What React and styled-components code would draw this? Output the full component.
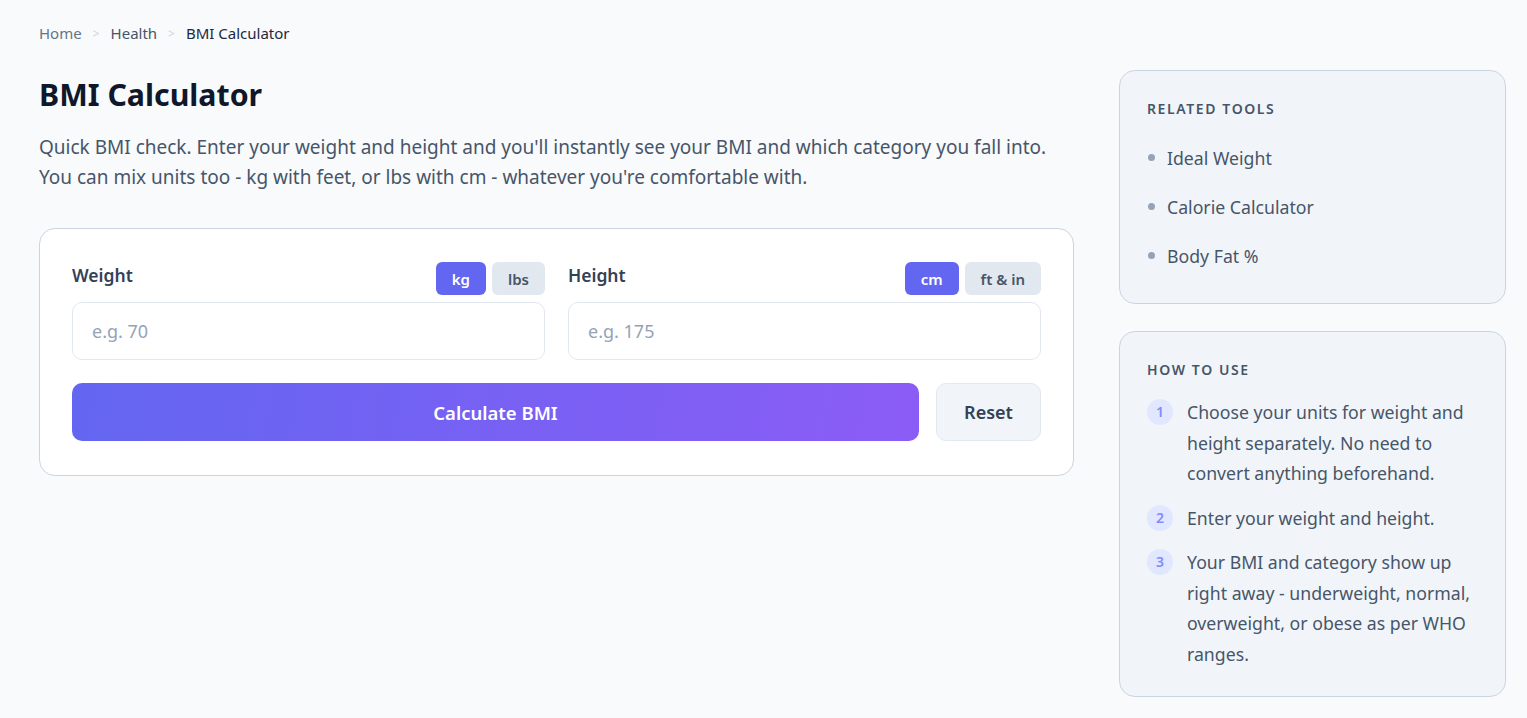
import React, { useState } from "react";
import styled, { createGlobalStyle } from "styled-components";

const GlobalStyle = createGlobalStyle`
  * { box-sizing: border-box; }
  body {
    margin: 0;
    background: #f8fafc;
    font-family: "Noto Sans", "Open Sans", sans-serif;
    color: #334155;
  }
`;

//layout
const Page = styled.div`
  padding: 22px 21px 20px 39px;
`;

const Breadcrumb = styled.nav`
  display: flex;
  align-items: center;
  gap: 11px;
  height: 22px;
`;

const Crumb = styled.span`
  color: ${(p) => (p.current ? "#1e293b" : p.sep ? "#cbd5e1" : p.tone || "#64748b")};
  font-size: ${(p) => (p.sep ? "12px" : "15px")};
`;

const Columns = styled.div`
  display: grid;
  grid-template-columns: 1035px 387px;
  gap: 45px;
  margin-top: 26px;
`;

const Main = styled.main`
  padding-top: 5px;
`;

//text
const Title = styled.h1`
  margin: 0;
  font-size: 30.3px;
  line-height: 40px;
  font-weight: 700;
  color: #0f172a;
`;

const Intro = styled.p`
  margin: 17px 0 0;
  font-size: 19px;
  line-height: 30px;
  color: #475569;
`;

//calculator card
const Card = styled.section`
  margin-top: 36px;
  background: #fff;
  border: 1px solid #cbd5e1;
  border-radius: 16px;
  padding: 32px 32px 34px;
`;

const Fields = styled.div`
  display: grid;
  grid-template-columns: 1fr 1fr;
  gap: 23px;
`;

const Field = styled.div`
  display: flex;
  flex-direction: column;
  gap: 7px;
`;

const FieldHead = styled.div`
  display: flex;
  justify-content: space-between;
  align-items: flex-start;
`;

const Label = styled.label`
  font-size: 17.5px;
  font-weight: 600;
  color: #334155;
  line-height: 26px;
  padding-top: 1px;
`;

const Toggle = styled.div`
  display: flex;
  gap: 6px;
  padding-top: 1px;
`;

const UnitButton = styled.button`
  height: 33px;
  padding: 0 16px;
  border: none;
  border-radius: 6px;
  font-family: inherit;
  font-size: 15px;
  font-weight: 600;
  background: ${(p) => (p.active ? "#6366f1" : "#e2e8f0")};
  color: ${(p) => (p.active ? "#fff" : "#475569")};
  cursor: pointer;
`;

const Input = styled.input`
  height: 58px;
  width: 100%;
  padding: 0 19px;
  border: 1px solid #e2e8f0;
  border-radius: 10px;
  font-family: inherit;
  font-size: 18px;
  color: #0f172a;
  background: #fff;
  outline: none;

  &::placeholder {
    color: #94a3b8;
  }
`;

const Actions = styled.div`
  display: flex;
  gap: 17px;
  margin-top: 23px;
`;

const CalcButton = styled.button`
  flex: 1;
  height: 58px;
  border: none;
  border-radius: 10px;
  background: linear-gradient(100deg, #6366f1 0%, #8b5cf6 100%);
  color: #fff;
  font-family: inherit;
  font-size: 18.5px;
  font-weight: 600;
  cursor: pointer;
`;

const ResetButton = styled.button`
  width: 105px;
  height: 58px;
  border: 1px solid #e2e8f0;
  border-radius: 10px;
  background: #f1f5f9;
  color: #334155;
  font-family: inherit;
  font-size: 18px;
  font-weight: 600;
  cursor: pointer;
`;

//sidebar
const Side = styled.aside`
  display: flex;
  flex-direction: column;
  gap: 27px;
`;

const SideCard = styled.div`
  background: #f1f5f9;
  border: 1px solid #cbd5e1;
  border-radius: 16px;
  padding: 28px 27px ${(p) => p.bottom || 28}px;
`;

const SideTitle = styled.h3`
  margin: 0;
  font-size: 14px;
  line-height: 20px;
  font-weight: 600;
  letter-spacing: 1.6px;
  color: #475569;
`;

const ToolList = styled.ul`
  list-style: none;
  margin: 24px 0 0;
  padding: 0;
  display: flex;
  flex-direction: column;
  gap: 19px;
`;

const ToolItem = styled.li`
  display: flex;
  align-items: center;
  gap: 12px;
  font-size: 17.7px;
  line-height: 30px;
  color: #475569;

  &::before {
    content: "";
    width: 7px;
    height: 7px;
    border-radius: 50%;
    background: #94a3b8;
    margin: 0 0 1px 1px;
  }
`;

const Steps = styled.ol`
  list-style: none;
  margin: 17px 0 0;
  padding: 0;
  display: flex;
  flex-direction: column;
  gap: 14px;
`;

const Step = styled.li`
  display: flex;
  gap: 14px;
  font-size: 17.7px;
  line-height: 30.5px;
  color: #475569;
`;

const StepNum = styled.span`
  flex: 0 0 26px;
  height: 26px;
  margin-top: 2px;
  border-radius: 50%;
  background: #e0e7ff;
  color: #818cf8;
  font-size: 14px;
  font-weight: 600;
  display: flex;
  align-items: center;
  justify-content: center;
  line-height: 1;
`;

const tools = ["Ideal Weight", "Calorie Calculator", "Body Fat %"];

const steps = [
  "Choose your units for weight and height separately. No need to convert anything beforehand.",
  "Enter your weight and height.",
  "Your BMI and category show up right away - underweight, normal, overweight, or obese as per WHO ranges.",
];

export default function App() {
  const [wUnit, setWUnit] = useState("kg");
  const [hUnit, setHUnit] = useState("cm");

  return (
    <Page>
      <GlobalStyle />
      <Breadcrumb>
        <Crumb>Home</Crumb>
        <Crumb sep>&gt;</Crumb>
        <Crumb tone="#475569">Health</Crumb>
        <Crumb sep>&gt;</Crumb>
        <Crumb current>BMI Calculator</Crumb>
      </Breadcrumb>
      <Columns>
        <Main>
          <Title>BMI Calculator</Title>
          <Intro>
            Quick BMI check. Enter your weight and height and you'll instantly see your BMI and
            which category you fall into.
            <br />
            You can mix units too - kg with feet, or lbs with cm - whatever you're comfortable with.
          </Intro>
          <Card>
            <Fields>
              <Field>
                <FieldHead>
                  <Label>Weight</Label>
                  <Toggle>
                    <UnitButton active={wUnit === "kg"} onClick={() => setWUnit("kg")}>kg</UnitButton>
                    <UnitButton active={wUnit === "lbs"} onClick={() => setWUnit("lbs")}>lbs</UnitButton>
                  </Toggle>
                </FieldHead>
                <Input placeholder="e.g. 70" />
              </Field>
              <Field>
                <FieldHead>
                  <Label>Height</Label>
                  <Toggle>
                    <UnitButton active={hUnit === "cm"} onClick={() => setHUnit("cm")}>cm</UnitButton>
                    <UnitButton active={hUnit === "ft"} onClick={() => setHUnit("ft")}>ft &amp; in</UnitButton>
                  </Toggle>
                </FieldHead>
                <Input placeholder="e.g. 175" />
              </Field>
            </Fields>
            <Actions>
              <CalcButton>Calculate BMI</CalcButton>
              <ResetButton>Reset</ResetButton>
            </Actions>
          </Card>
        </Main>
        <Side>
          <SideCard bottom={32}>
            <SideTitle>RELATED TOOLS</SideTitle>
            <ToolList>
              {tools.map((t) => (
                <ToolItem key={t}>{t}</ToolItem>
              ))}
            </ToolList>
          </SideCard>
          <SideCard bottom={27}>
            <SideTitle>HOW TO USE</SideTitle>
            <Steps>
              {steps.map((s, i) => (
                <Step key={i}>
                  <StepNum>{i + 1}</StepNum>
                  <span>{s}</span>
                </Step>
              ))}
            </Steps>
          </SideCard>
        </Side>
      </Columns>
    </Page>
  );
}
